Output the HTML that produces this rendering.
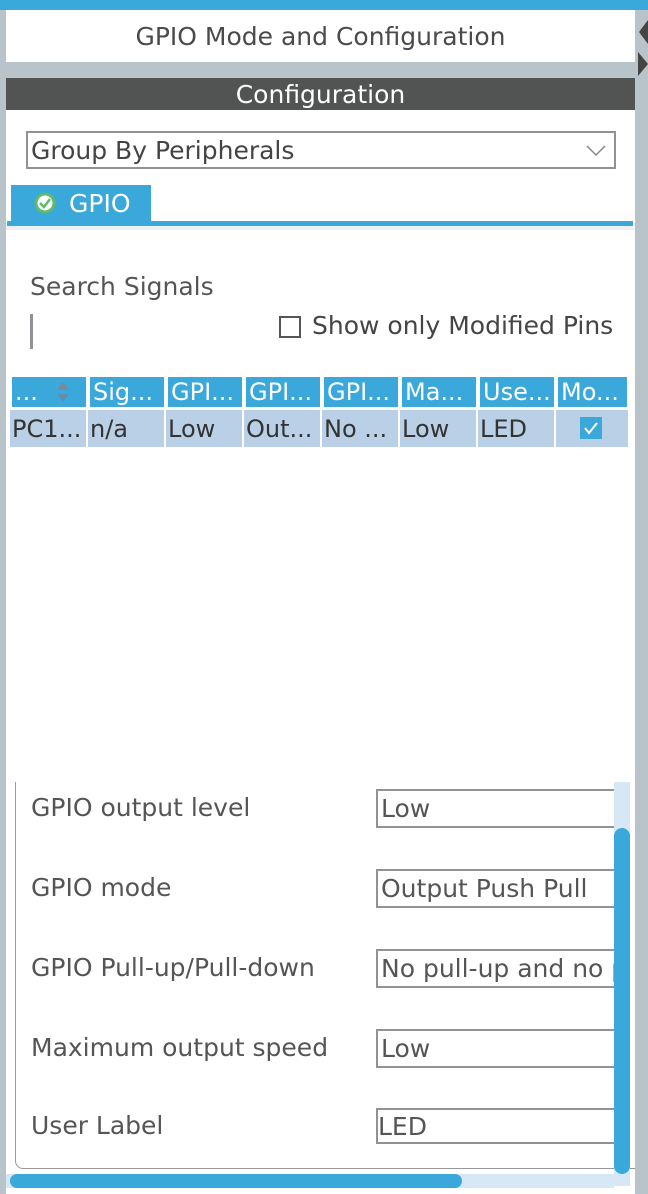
<!DOCTYPE html>
<html><head><meta charset="utf-8"><style>
*{margin:0;padding:0;box-sizing:border-box}
body{width:648px;height:1194px;background:#b8c3ca;position:relative;overflow:hidden;font-family:"DejaVu Sans","Liberation Sans",sans-serif;color:#4a4a4a}
.a{position:absolute}
.th{position:absolute;top:377px;height:30px;background:#3aa8db;color:#fff;font-size:24px;line-height:30px;padding-left:3px;white-space:nowrap;overflow:hidden}
.td{position:absolute;top:410px;height:37px;background:#b9d0e6;color:#333;font-size:24px;line-height:38px;padding-left:2px;white-space:nowrap;overflow:hidden}
.lb{position:absolute;left:31px;font-size:25px;color:#555}
.in{position:absolute;left:376px;width:240px;border:2px solid #8e9398;border-right:none;background:#fff;font-size:25px;color:#555;padding-left:3px;white-space:nowrap;overflow:hidden}
</style></head><body>
<div class="a" style="left:0;top:0;width:648px;height:10px;background:#3aa8db"></div>
<div class="a" style="left:6px;top:10px;width:629px;height:52px;background:#fff;text-align:center;font-size:25px;line-height:54px;color:#4a4a4a">GPIO Mode and Configuration</div>
<svg class="a" style="left:636px;top:14px" width="12" height="64"><path d="M12 6 L3 18 L12 30Z M2 38 L12 50 L2 62Z" fill="#444"/></svg>
<div class="a" style="left:6px;top:78px;width:629px;height:32px;background:#525454;color:#fff;text-align:center;font-size:25px;line-height:34px">Configuration</div>
<div class="a" style="left:6px;top:110px;width:629px;height:1084px;background:#fff"></div>
<div class="a" style="left:26px;top:131px;width:590px;height:38px;border:2px solid #8e9398;font-size:25px;line-height:36px;padding-left:3px;color:#444">Group By Peripherals</div>
<svg class="a" style="left:586px;top:145px" width="20" height="12"><path d="M1 1 L10 10 L19 1" stroke="#888" stroke-width="1.5" fill="none"/></svg>
<div class="a" style="left:11px;top:185px;width:140px;height:38px;background:#3aa8db;color:#fff;font-size:25px;line-height:38px;padding-left:58px">GPIO</div>
<svg class="a" style="left:34px;top:192px" width="22" height="22"><circle cx="11" cy="11" r="9" fill="#fff" stroke="#5dbb6a" stroke-width="3"/><path d="M6 11 L10 15 L16 7" stroke="#5dbb6a" stroke-width="2.5" fill="none"/></svg>
<div class="a" style="left:7px;top:221px;width:626px;height:5px;background:#3aa8db"></div>
<div class="a" style="left:6px;top:226px;width:629px;height:4px;background:#eef1f4"></div>
<div class="a" style="left:30px;top:272px;font-size:25px;color:#555">Search Signals</div>
<div class="a" style="left:30px;top:314px;width:3px;height:35px;background:#8e9398"></div>
<div class="a" style="left:279px;top:316px;width:22px;height:22px;border:2px solid #555;background:#fff"></div>
<div class="a" style="left:312px;top:311px;font-size:25px;color:#444">Show only Modified Pins</div>
<div class="th" style="left:12px;width:74px">...</div>
<svg class="a" style="left:54px;top:379px" width="18" height="26"><path d="M9 3 L15 11 L3 11Z" fill="#7b8a95"/><path d="M9 23 L15 15 L3 15Z" fill="#5a8fb0"/></svg>
<div class="th" style="left:90px;width:74px">Sig...</div>
<div class="th" style="left:168px;width:74px">GPI...</div>
<div class="th" style="left:246px;width:74px">GPI...</div>
<div class="th" style="left:324px;width:74px">GPI...</div>
<div class="th" style="left:402px;width:74px">Ma...</div>
<div class="th" style="left:480px;width:74px">Use...</div>
<div class="th" style="left:558px;width:69px">Mo...</div>
<div class="td" style="left:10px;width:76px">PC1...</div>
<div class="td" style="left:88px;width:76px">n/a</div>
<div class="td" style="left:166px;width:76px">Low</div>
<div class="td" style="left:244px;width:76px">Out...</div>
<div class="td" style="left:322px;width:76px">No ...</div>
<div class="td" style="left:400px;width:76px">Low</div>
<div class="td" style="left:478px;width:76px">LED</div>
<div class="td" style="left:556px;width:72px"></div>
<div class="a" style="left:580px;top:417px;width:22px;height:22px;background:#3aa8db"></div>
<svg class="a" style="left:580px;top:417px" width="22" height="22"><path d="M5 11 L9 16 L17 6" stroke="#fff" stroke-width="2" fill="none"/></svg>
<div class="a" style="left:15px;top:782px;width:620px;height:387px;border-left:1px solid #999;border-bottom:1px solid #999;border-bottom-left-radius:8px"></div>
<div class="lb" style="top:793px">GPIO output level</div>
<div class="lb" style="top:873px">GPIO mode</div>
<div class="lb" style="top:953px">GPIO Pull-up/Pull-down</div>
<div class="lb" style="top:1033px">Maximum output speed</div>
<div class="lb" style="top:1111px">User Label</div>
<div class="in" style="top:789px;height:39px;line-height:36px">Low</div>
<div class="in" style="top:869px;height:39px;line-height:36px">Output Push Pull</div>
<div class="in" style="top:949px;height:39px;line-height:36px">No pull-up and no pull-down</div>
<div class="in" style="top:1029px;height:39px;line-height:36px">Low</div>
<div class="in" style="top:1108px;height:36px;line-height:33px;padding-left:0">LED</div>
<div class="a" style="left:614px;top:782px;width:16px;height:404px;background:#d6e8f5"></div>
<div class="a" style="left:614px;top:828px;width:16px;height:346px;background:#3aa8db;border-radius:8px"></div>
<div class="a" style="left:6px;top:1174px;width:608px;height:14px;background:#d6e8f5"></div>
<div class="a" style="left:10px;top:1174px;width:452px;height:14px;background:#3aa8db;border-radius:7px"></div>
</body></html>
